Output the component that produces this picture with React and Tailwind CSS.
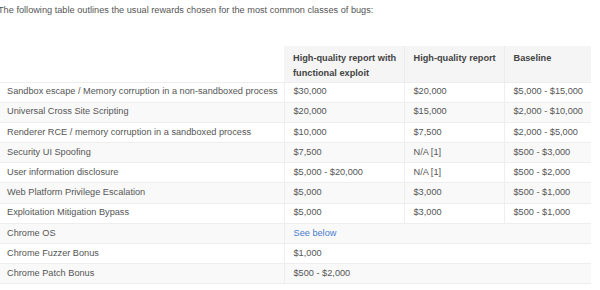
import React from "react";

const rows = [
  ["Sandbox escape / Memory corruption in a non-sandboxed process", "$30,000", "$20,000", "$5,000 - $15,000"],
  ["Universal Cross Site Scripting", "$20,000", "$15,000", "$2,000 - $10,000"],
  ["Renderer RCE / memory corruption in a sandboxed process", "$10,000", "$7,500", "$2,000 - $5,000"],
  ["Security UI Spoofing", "$7,500", "N/A [1]", "$500 - $3,000"],
  ["User information disclosure", "$5,000 - $20,000", "N/A [1]", "$500 - $2,000"],
  ["Web Platform Privilege Escalation", "$5,000", "$3,000", "$500 - $1,000"],
  ["Exploitation Mitigation Bypass", "$5,000", "$3,000", "$500 - $1,000"],
];

const spanRows = [
  ["Chrome OS", "See below", true],
  ["Chrome Fuzzer Bonus", "$1,000", false],
  ["Chrome Patch Bonus", "$500 - $2,000", false],
];

const App = () => {
  return (
    <div className="w-[600px] h-[290px] overflow-hidden bg-white text-[#555] text-[9.2px] font-['Liberation_Sans',Arial,sans-serif]">
      {/* Intro line */}
      <p className="ml-[-2px] pt-[4px] leading-[12px]">
        The following table outlines the usual rewards chosen for the most common classes of bugs:
      </p>

      <table className="mt-[30px] w-[591px] table-fixed border-collapse">
        <colgroup>
          <col className="w-[284px]" />
          <col className="w-[120px]" />
          <col className="w-[100px]" />
          <col className="w-[87px]" />
        </colgroup>
        <thead>
          <tr className="h-[36px]">
            <th className="bg-white" />
            <th className="bg-[#f5f5f5] border-r border-[#ececec] pl-[9px] pr-[4px] pt-[5px] align-top text-left font-bold text-[#444] leading-[15px]">
              High-quality report with functional exploit
            </th>
            <th className="bg-[#f5f5f5] border-r border-[#ececec] pl-[9px] pr-0 pt-[5px] align-top text-left font-bold text-[#444] leading-[15px] whitespace-nowrap">
              High-quality report
            </th>
            <th className="bg-[#f5f5f5] pl-[9px] pr-0 pt-[5px] align-top text-left font-bold text-[#444] leading-[15px]">
              Baseline
            </th>
          </tr>
        </thead>
        <tbody>
          {rows.map((r, i) => (
            <tr key={r[0]} className={`h-[20.2px] border-t border-[#eeeeee] ${i % 2 === 1 ? "bg-[#f9f9f9]" : "bg-white"}`}>
              <td className="pl-[7px] pr-0 whitespace-nowrap border-r border-[#eeeeee]">{r[0]}</td>
              <td className="pl-[9px] pr-0 whitespace-nowrap border-r border-[#eeeeee]">{r[1]}</td>
              <td className="pl-[9px] pr-0 whitespace-nowrap border-r border-[#eeeeee]">{r[2]}</td>
              <td className="pl-[9px] pr-0 whitespace-nowrap">{r[3]}</td>
            </tr>
          ))}
          {spanRows.map(([label, value, link], i) => (
            <tr
              key={label}
              className={`h-[20.2px] border-t border-[#eeeeee] ${(rows.length + i) % 2 === 1 ? "bg-[#f9f9f9]" : "bg-white"} ${i === spanRows.length - 1 ? "border-b" : ""}`}
            >
              <td className="pl-[7px] pr-0 whitespace-nowrap border-r border-[#eeeeee]">{label}</td>
              <td colSpan={3} className="pl-[9px] pr-0">
                {link ? <a className="text-[#4a7bd0]">{value}</a> : value}
              </td>
            </tr>
          ))}
        </tbody>
      </table>
    </div>
  );
};

export default App;
